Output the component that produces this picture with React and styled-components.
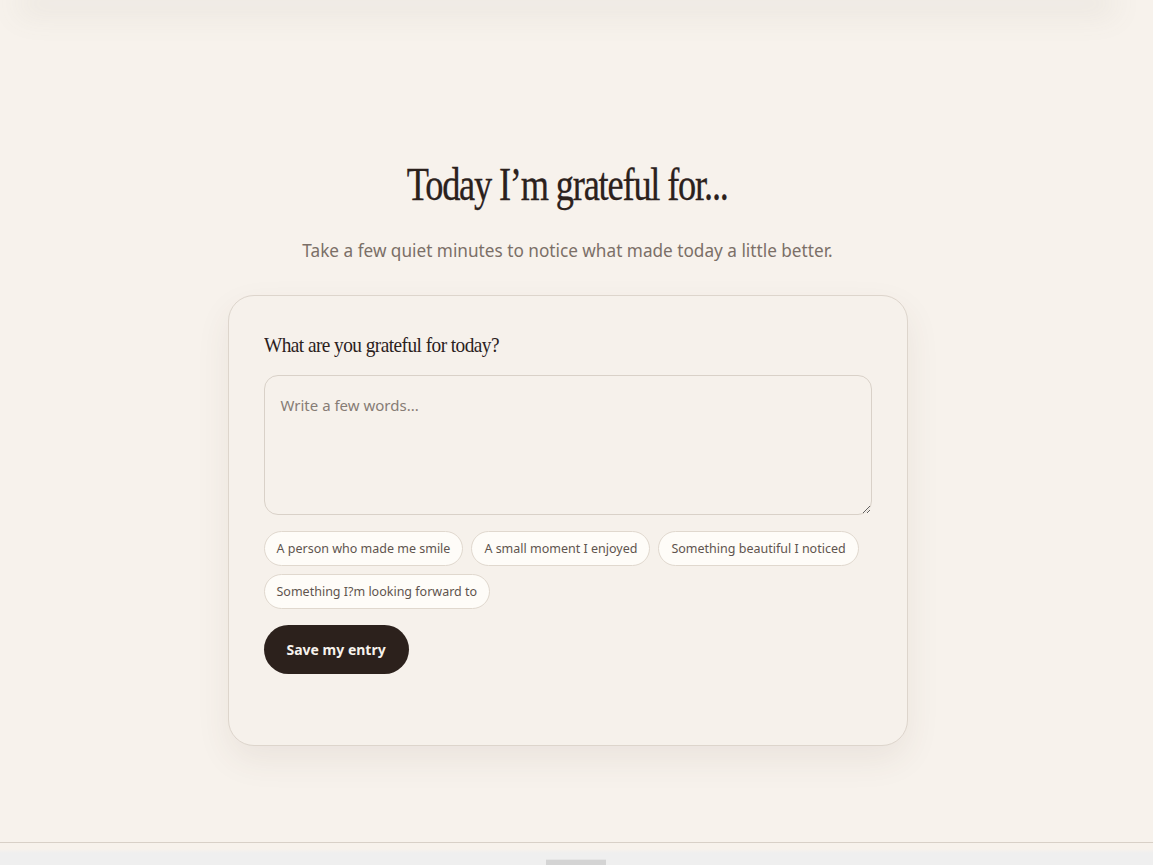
import React, { useState } from 'react';
import styled, { createGlobalStyle } from 'styled-components';

const GlobalStyle = createGlobalStyle`
  html, body {
    margin: 0;
    padding: 0;
    background: #f7f2ec;
  }
  body {
    font-family: 'Noto Sans', 'Liberation Sans', sans-serif;
    color: #2b211c;
  }
`;

const Page = styled.div`
  min-height: 865px;
  display: flex;
  flex-direction: column;
  overflow: hidden;
`;

const TopGlow = styled.div`
  height: 1px;
  margin: -1px 50px 0 30px;
  box-shadow: 0 4px 30px 12px rgba(120, 120, 110, 0.09);
`;

const Main = styled.main`
  flex: 1;
  display: flex;
  flex-direction: column;
  align-items: center;
  padding: 157px 18px 0 0;
`;

const Heading = styled.h1`
  margin: 0;
  font-family: 'Liberation Serif', 'DejaVu Serif', serif;
  font-weight: 400;
  font-size: 46px;
  line-height: 56px;
  letter-spacing: -1.5px;
  transform: scaleX(0.79);
  color: #2b211c;
  -webkit-text-stroke: 0.3px #2b211c;
`;

const Subtitle = styled.p`
  margin: 26px 0 0;
  font-size: 17.2px;
  line-height: 24px;
  color: #7b6f67;
`;

const Card = styled.section`
  box-sizing: border-box;
  width: 680px;
  margin-top: 32px;
  padding: 36px 35px 71px;
  background: #f6f1eb;
  border: 1px solid #ddd5cc;
  border-radius: 26px;
  box-shadow: 0 14px 34px rgba(90, 70, 50, 0.08);
`;

const Label = styled.label`
  display: block;
  font-family: 'Liberation Serif', 'DejaVu Serif', serif;
  font-size: 21px;
  line-height: 26px;
  letter-spacing: -0.6px;
  color: #2b211c;
  transform: scaleX(0.92);
  transform-origin: left center;
`;

const Entry = styled.textarea`
  display: block;
  box-sizing: border-box;
  width: 100%;
  height: 140px;
  margin-top: 17px;
  padding: 18px 16px;
  font-family: 'Noto Sans', 'Liberation Sans', sans-serif;
  font-size: 15px;
  line-height: 22px;
  color: #2b211c;
  background: #f6f1eb;
  border: 1px solid #d9d1c8;
  border-radius: 14px;
  outline: none;
  &::placeholder {
    color: #867c75;
  }
`;

const Prompts = styled.div`
  display: flex;
  flex-wrap: wrap;
  gap: 8px;
  margin-top: 16px;
`;

const Chip = styled.button`
  height: 35px;
  padding: 0 12px;
  font-family: 'Noto Sans', 'Liberation Sans', sans-serif;
  font-size: 12.5px;
  color: #5e544e;
  background: #fefcf8;
  border: 1px solid #e0d8ce;
  border-radius: 18px;
  cursor: pointer;
`;

const SaveButton = styled.button`
  margin-top: 16px;
  height: 49px;
  padding: 0 23px;
  font-family: 'Noto Sans', 'Liberation Sans', sans-serif;
  font-size: 14px;
  font-weight: 700;
  color: #f7f2ec;
  background: #2c211c;
  border: none;
  border-radius: 25px;
  cursor: pointer;
`;

const Footer = styled.footer`
  height: 22px;
  border-top: 1px solid #d8d0c7;
  background: linear-gradient(#f7f2ec 0, #f7f2ec 6px, #efefef 10px);
  display: flex;
  justify-content: center;
  align-items: flex-end;
`;

const Handle = styled.div`
  width: 60px;
  height: 5px;
  margin-right: 2px;
  background: #d4d4d4;
  border-top: 1px solid #e6e6e6;
`;

const prompts = [
  'A person who made me smile',
  'A small moment I enjoyed',
  'Something beautiful I noticed',
  'Something I?m looking forward to',
];

export default function App() {
  const [text, setText] = useState('');

  return (
    <>
      <GlobalStyle />
      <Page>
        <TopGlow />
        <Main>
          <Heading>Today I’m grateful for...</Heading>
          <Subtitle>Take a few quiet minutes to notice what made today a little better.</Subtitle>
          <Card>
            <Label htmlFor="entry">What are you grateful for today?</Label>
            <Entry
              id="entry"
              placeholder="Write a few words..."
              value={text}
              onChange={(e) => setText(e.target.value)}
            />
            <Prompts>
              {prompts.map((p) => (
                <Chip key={p} onClick={() => setText(text ? text + ' ' + p : p)}>{p}</Chip>
              ))}
            </Prompts>
            <SaveButton>Save my entry</SaveButton>
          </Card>
        </Main>
        <Footer>
          <Handle />
        </Footer>
      </Page>
    </>
  );
}
